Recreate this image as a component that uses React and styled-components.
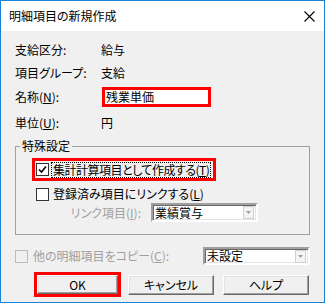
import styled, { createGlobalStyle } from 'styled-components';

const GlobalStyle = createGlobalStyle`
  body {
    margin: 0;
    font-family: "Noto Sans CJK JP", "Noto Sans", sans-serif;
    font-feature-settings: "palt";
    font-size: 12px;
    color: #000;
    white-space: nowrap;
  }
`;

const Window = styled.div`
  width: 325px;
  height: 303px;
  box-sizing: border-box;
  border: 1px solid #1883d7;
  background: #f0f0f0;
  display: flex;
  flex-direction: column;
`;

const TitleBar = styled.div`
  height: 30px;
  flex-shrink: 0;
  background: #fff;
  display: flex;
  align-items: center;
  justify-content: space-between;
  padding: 0 9px 0 8px;
`;

const Title = styled.span`
  font-size: 12px;
  line-height: 14px;
`;

const Body = styled.div`
  padding: 9px 14px 0 14px;
  display: flex;
  flex-direction: column;
`;

const FieldRow = styled.div`
  display: grid;
  grid-template-columns: 86px 1fr;
  align-items: center;
  height: 20px;
  margin-top: ${p => p.$mt || 0}px;
  line-height: 14px;
`;

const NameInput = styled.div`
  margin-left: 1px;
  width: 109px;
  height: 20px;
  box-sizing: border-box;
  border: 3px solid #ff0000;
  background: #fff;
  padding-left: 1px;
  display: flex;
  align-items: center;
  line-height: 14px;
`;

const Group = styled.fieldset`
  margin: 6px 0 0;
  padding: 0;
  border: 1px solid #a0a0a0;
  min-width: 0;
  flex-shrink: 0;
`;

const Legend = styled.legend`
  margin-left: 4px;
  padding: 0 2px;
  line-height: 14px;
`;

const GroupInner = styled.div`
  padding: 5px 0 12px 16px;
  display: flex;
  flex-direction: column;
  align-items: flex-start;
`;

const Highlight = styled.div`
  display: flex;
  align-items: center;
  box-sizing: border-box;
  width: 184px;
  height: 23px;
  border: 3px solid #ff0000;
  padding-left: 1px;
  gap: 4px;
`;

const CheckRow = styled.div`
  display: flex;
  align-items: center;
  gap: ${p => p.$gap || 4}px;
  height: 16px;
  margin-top: ${p => p.$mt || 0}px;
  padding-left: ${p => p.$pl || 0}px;
  color: ${p => (p.$disabled ? '#a0a0a0' : '#000')};
  line-height: 14px;
`;

const Box = styled.span`
  width: 13px;
  height: 13px;
  box-sizing: border-box;
  flex-shrink: 0;
  border: 1px solid ${p => (p.$disabled ? '#bcbcbc' : '#333')};
  background: ${p => (p.$disabled ? '#f0f0f0' : '#fff')};
  display: flex;
  align-items: center;
  justify-content: center;
`;

const FocusLabel = styled.span`
  outline: 1px dotted #000;
  padding: 0 1px;
  margin-left: -1px;
  line-height: 14px;
  letter-spacing: -0.5px;
`;

const LinkRow = styled.div`
  display: grid;
  grid-template-columns: 109px 107px;
  column-gap: 10px;
  align-items: center;
  margin-top: 1px;
`;

const MutedLabel = styled.span`
  color: #a0a0a0;
  text-align: right;
  line-height: 14px;
`;

const Combo = styled.div`
  width: 107px;
  height: ${p => p.$h || 19}px;
  box-sizing: border-box;
  border: 2px solid;
  border-color: #a0a0a0 #fff #fff #a0a0a0;
  box-shadow: inset 1px 1px 0 #696969, inset -1px -1px 0 #e3e3e3;
  background: #fff;
  display: flex;
  align-items: center;
  justify-content: space-between;
  padding: 0 2px 0 2px;
  line-height: 14px;
`;

const DropButton = styled.span`
  width: 11px;
  height: 13px;
  box-sizing: border-box;
  border: 1px solid #cfcfcf;
  background: #f4f4f4;
  display: flex;
  align-items: center;
  justify-content: center;
`;

const CopyRow = styled.div`
  display: flex;
  align-items: center;
  justify-content: space-between;
  height: 18px;
  margin-top: 12px;
  flex-shrink: 0;
`;

const ButtonRow = styled.div`
  display: flex;
  align-items: center;
  height: 25px;
  margin-top: 7px;
  padding-left: 19px;
  flex-shrink: 0;
`;

const OkFrame = styled.div`
  display: flex;
  border: 3px solid #ff0000;
`;

const Button = styled.button`
  width: ${p => p.$w || 86}px;
  height: ${p => p.$h || 20}px;
  margin-left: ${p => p.$ml || 0}px;
  box-sizing: border-box;
  padding: 0;
  font: inherit;
  font-size: 12px;
  color: #000;
  background: #f0f0f0;
  border: 1px solid;
  border-color: #fff #696969 #696969 #fff;
  box-shadow: inset -1px -1px 0 #a0a0a0, inset 1px 1px 0 #e3e3e3;
  line-height: 14px;
`;

function CloseIcon() {
  return (
    <svg width="11" height="11" viewBox="0 0 11 11">
      <path d="M0.5 0.5 L10.5 10.5 M10.5 0.5 L0.5 10.5" stroke="#000" strokeWidth="1.1" fill="none" />
    </svg>
  );
}

function Check() {
  return (
    <svg width="9" height="9" viewBox="0 0 9 9">
      <path d="M1 4.5 L3.5 7 L8 1.5" stroke="#000" strokeWidth="1.6" fill="none" />
    </svg>
  );
}

function Arrow() {
  return (
    <svg width="5" height="3" viewBox="0 0 5 3">
      <path d="M0 0 H5 L2.5 3 Z" fill="#a0a0a0" />
    </svg>
  );
}

export default function App() {
  return (
    <>
      <GlobalStyle />
      <Window>
        <TitleBar>
          <Title>明細項目の新規作成</Title>
          <CloseIcon />
        </TitleBar>
        <Body>
          <FieldRow $mt={0}>
            <span>支給区分:</span>
            <span>給与</span>
          </FieldRow>
          <FieldRow $mt={3}>
            <span>項目グループ:</span>
            <span>支給</span>
          </FieldRow>
          <FieldRow $mt={4}>
            <span>名称(<u>N</u>):</span>
            <NameInput>残業単価</NameInput>
          </FieldRow>
          <FieldRow $mt={6}>
            <span>単位(<u>U</u>):</span>
            <span>円</span>
          </FieldRow>

          <Group>
            <Legend>特殊設定</Legend>
            <GroupInner>
              <Highlight>
                <Box><Check /></Box>
                <FocusLabel>集計計算項目として作成する(<u>T</u>)</FocusLabel>
              </Highlight>
              <CheckRow $mt={5} $pl={4}>
                <Box />
                <span>登録済み項目にリンクする(<u>L</u>)</span>
              </CheckRow>
              <LinkRow>
                <MutedLabel>リンク項目(<u>I</u>):</MutedLabel>
                <Combo>
                  <span>業績賞与</span>
                  <DropButton><Arrow /></DropButton>
                </Combo>
              </LinkRow>
            </GroupInner>
          </Group>

          <CopyRow>
            <CheckRow $disabled $gap={5}>
              <Box $disabled />
              <span>他の明細項目をコピー(<u>C</u>):</span>
            </CheckRow>
            <Combo $h={18}>
              <span>未設定</span>
              <DropButton><Arrow /></DropButton>
            </Combo>
          </CopyRow>

          <ButtonRow>
            <OkFrame>
              <Button $w={81} $h={19}>OK</Button>
            </OkFrame>
            <Button $ml={7}>キャンセル</Button>
            <Button $ml={9}>ヘルプ</Button>
          </ButtonRow>
        </Body>
      </Window>
    </>
  );
}
